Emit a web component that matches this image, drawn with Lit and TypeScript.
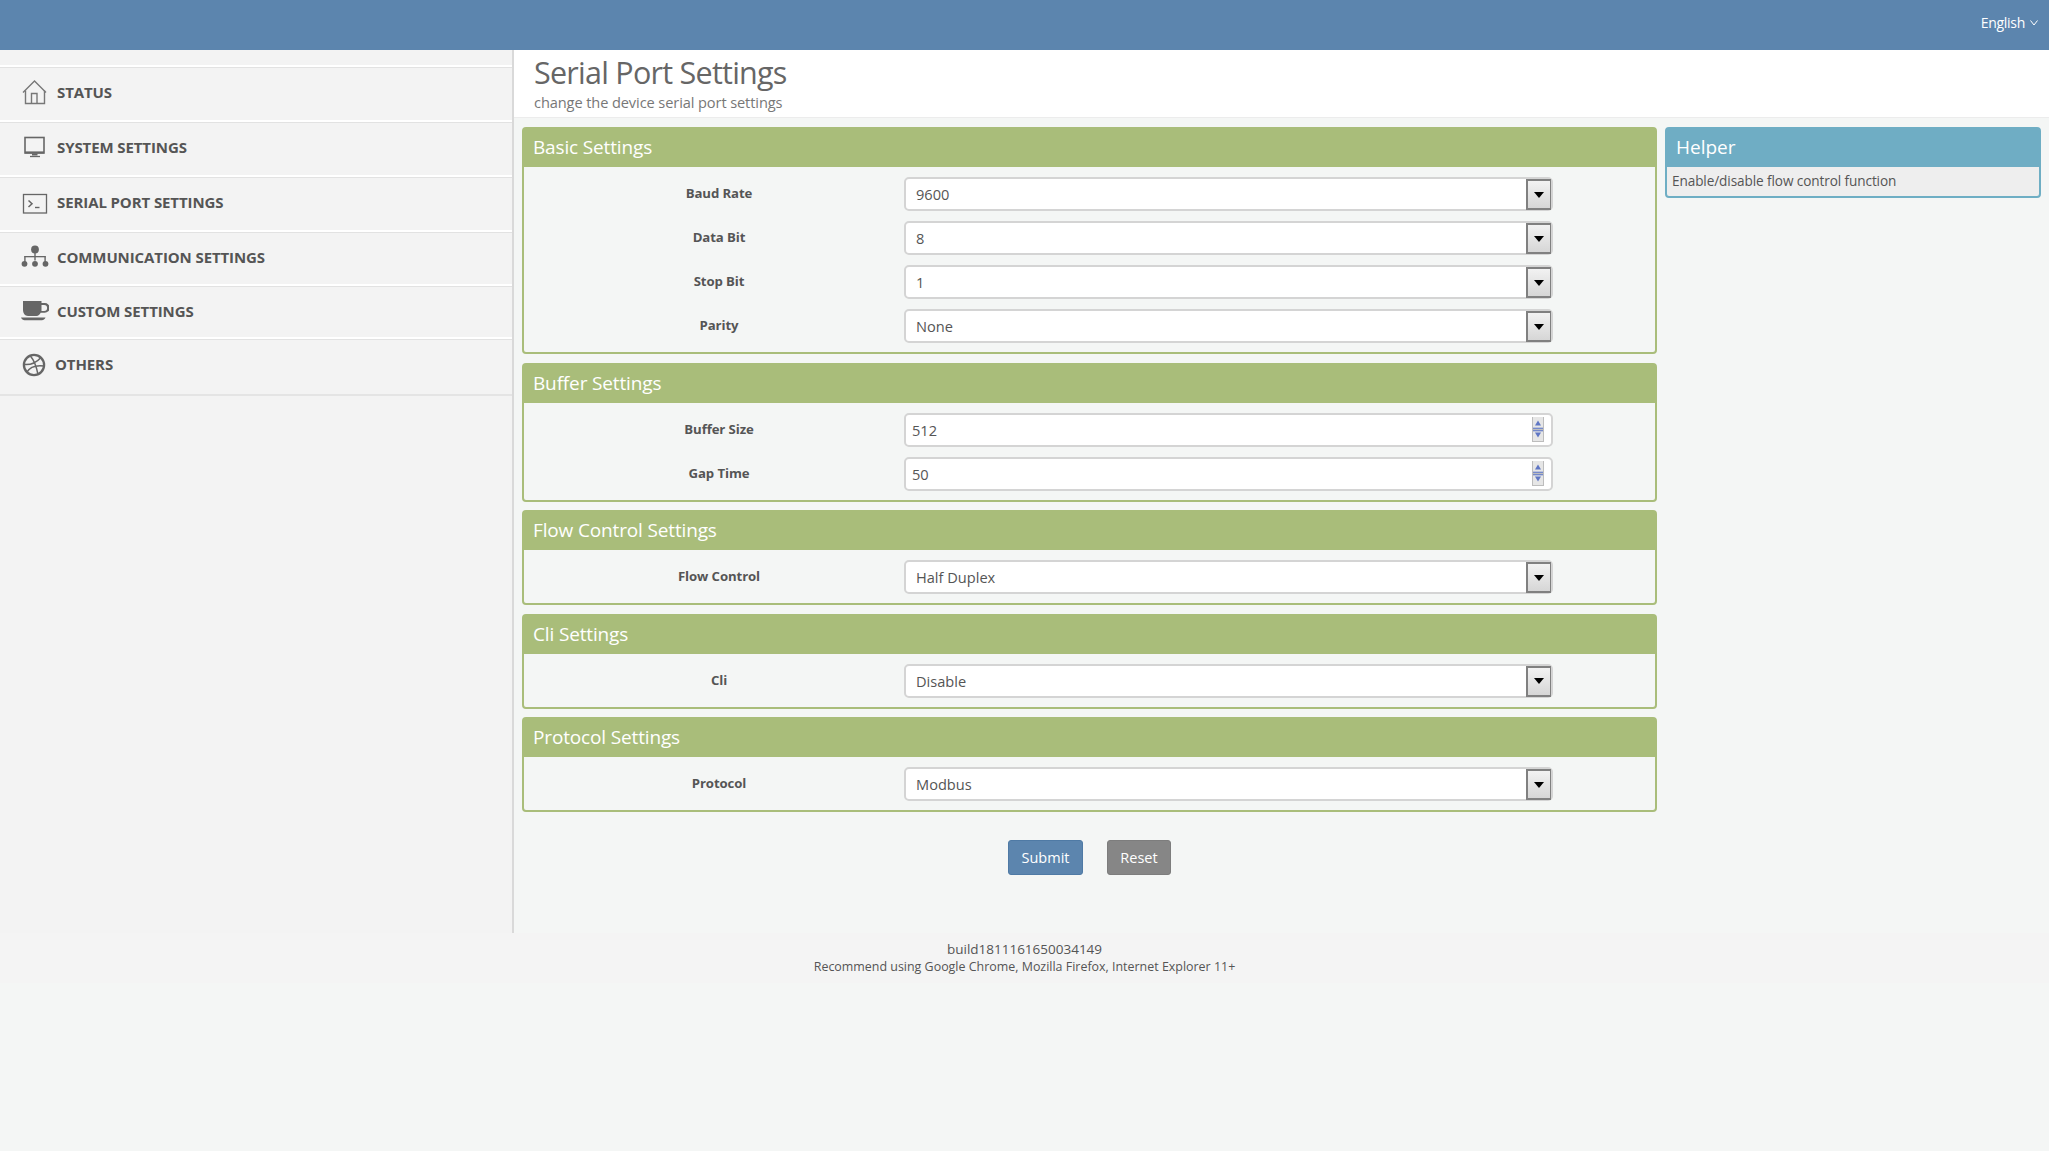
import { LitElement, html, css, svg } from "lit";
import { customElement } from "lit/decorators.js";

type Field = { label: string; value: string; kind: "select" | "number" };
type Panel = { title: string; fields: Field[] };

const PANELS: Panel[] = [
  { title: "Basic Settings", fields: [
    { label: "Baud Rate", value: "9600", kind: "select" },
    { label: "Data Bit", value: "8", kind: "select" },
    { label: "Stop Bit", value: "1", kind: "select" },
    { label: "Parity", value: "None", kind: "select" },
  ] },
  { title: "Buffer Settings", fields: [
    { label: "Buffer Size", value: "512", kind: "number" },
    { label: "Gap Time", value: "50", kind: "number" },
  ] },
  { title: "Flow Control Settings", fields: [{ label: "Flow Control", value: "Half Duplex", kind: "select" }] },
  { title: "Cli Settings", fields: [{ label: "Cli", value: "Disable", kind: "select" }] },
  { title: "Protocol Settings", fields: [{ label: "Protocol", value: "Modbus", kind: "select" }] },
];

const ICONS = {
  home: svg`<svg width="26" height="26" viewBox="0 0 26 26" fill="none" stroke="#777" stroke-width="1.4"><path d="M1 13.500 12.500 2 24 13.500"/><path d="M3.500 11.500V24.500H22.500V11.500"/><path d="M9.500 24.500V14.500h5.500V24.500"/></svg>`,
  monitor: svg`<svg width="26" height="26" viewBox="0 -2 26 26" fill="none" stroke="#666"><rect x="3" y="1.500" width="19" height="15.500" stroke-width="1.6"/><path d="M3 16.400h19" stroke-width="2"/><path d="M10 18.500h5.500" stroke-width="2"/><path d="M8 20.500h10" stroke-width="1.300"/></svg>`,
  terminal: svg`<svg width="26" height="26" viewBox="0 -4 26 26" fill="none" stroke="#666"><rect x="1.500" y="1.500" width="23" height="18.500" stroke-width="1.300"/><path d="M6.500 7.500 10 10.700 6.500 14" stroke-width="1.500"/><path d="M13 14.500h4.500" stroke-width="1.400"/></svg>`,
  tree: svg`<svg width="28" height="24" viewBox="0 0 28 24" fill="#666"><circle cx="14" cy="4.500" r="3.900"/><path d="M13.300 6h1.400v9.500h-1.400z"/><path d="M3.500 11h21v1.300h-21z"/><path d="M3.200 11h1.400v6h-1.400zM23.400 11h1.400v6h-1.400z"/><circle cx="3.500" cy="18.800" r="2.900"/><circle cx="14" cy="18.800" r="2.900"/><circle cx="24.500" cy="18.800" r="2.900"/></svg>`,
  cup: svg`<svg width="28" height="20" viewBox="0 0 28 20" fill="#666"><path d="M2 0h18.500v2h3.300a3.900 3.900 0 0 1 0 9.800h-4.100c-.9 2-2.300 3.200-4.200 3.200H7C4 15 2 12 2 9zM20.500 4v6h2.600a3 3 0 0 0 0-6z" fill-rule="evenodd"/><path d="M0 16.500h24.500c-.8 1.800-2.100 2.700-3.600 2.700H3.500C2 19.200.8 18.300 0 16.500z"/></svg>`,
  ball: svg`<svg width="24" height="26" viewBox="0 -2 24 26" fill="none" stroke="#666"><circle cx="12" cy="12" r="10.100" stroke-width="2.300"/><path d="M8 2.500c3.500 4 6.500 11 8 19M2 11.500c5.500.5 11.500-.8 17-7M4.500 19.500c3-5 8-8 18-6.500" stroke-width="1.500"/></svg>`,
};

const NAV = [
  { label: "STATUS", icon: ICONS.home, cls: "h55" },
  { label: "SYSTEM SETTINGS", icon: ICONS.monitor, cls: "h55" },
  { label: "SERIAL PORT SETTINGS", icon: ICONS.terminal, cls: "h55" },
  { label: "COMMUNICATION SETTINGS", icon: ICONS.tree, cls: "h54" },
  { label: "CUSTOM SETTINGS", icon: ICONS.cup, cls: "h53" },
  { label: "OTHERS", icon: ICONS.ball, cls: "h59 tight" },
];

@customElement("app-root")
export class AppRoot extends LitElement {
  static styles = css`
    :host { display: block; min-height: 1151px; background: #f4f6f5; color: #555; font-family: "Open Sans", "Noto Sans", sans-serif; font-size: 14px; }
    * { box-sizing: border-box; }
    .top { height: 50px; background: #5c85ae; display: flex; justify-content: flex-end; align-items: center; padding: 0 11px 5px 0; color: #fff; font-size: 14px; letter-spacing: -0.3px; gap: 5px; }
    .main { display: flex; height: 883px; }
    .side { width: 514px; flex: none; background: #f3f3f3; border-right: 2px solid #d9d9d9; padding-top: 15px; }
    .nav { display: flex; align-items: center; border-top: 2px solid #fff; box-shadow: inset 0 1px 0 #e2e2e2; padding: 0 0 3px 21px; font-weight: 700; font-size: 15px; letter-spacing: -0.1px; color: #555; }
    .nav.last { border-bottom: 2px solid #e4e4e4; }
    .h55 { height: 55px; } .h54 { height: 54px; } .h53 { height: 53px; padding-bottom: 2px; } .h59 { height: 59px; padding-bottom: 5px; }
    .ico { width: 36px; flex: none; display: flex; justify-content: center; padding-right: 8px; }
    .tight .ico { width: 34px; }
    .content { flex: 1; display: flex; flex-direction: column; min-width: 0; }
    .head { height: 68px; background: #fff; border-bottom: 1px solid #ececec; padding: 0 0 0 20px; }
    h1 { margin: 0; padding-top: 1px; font-weight: 400; font-size: 30.500px; line-height: 42px; letter-spacing: -0.75px; color: #666; }
    .sub { font-size: 14.600px; line-height: 18px; color: #777; letter-spacing: -0.1px; }
    .cols { display: flex; gap: 8px; padding: 9px 8px 0 8px; }
    .left { width: 1135px; flex: none; display: flex; flex-direction: column; gap: 8.500px; }
    .panel { border: 2px solid #a9bd7a; border-radius: 4px; }
    .ph { height: 39px; margin: -1px -1px 0; padding-left: 10px; background: #a9bd7a; color: #fff; font-size: 19px; line-height: 38px; letter-spacing: -0.15px; }
    .pb { padding: 10px 0 9px; display: flex; flex-direction: column; gap: 10px; }
    .row { height: 34px; display: flex; }
    .lab { width: 380px; padding-left: 10px; text-align: center; font-weight: 700; font-size: 13.200px; line-height: 32px; color: #555; letter-spacing: -0.1px; }
    .ctl { position: relative; width: 649px; height: 34px; }
    .ctl select, .ctl input { display: block; width: 100%; height: 100%; appearance: none; border: 2px solid #d4d4d4; border-radius: 5px; background: #fff; font: inherit; font-size: 14.600px; color: #555; padding: 0 0 0 10px; outline: none; }
    .ctl input { padding-left: 6px; }
    .arrow { position: absolute; right: 2px; top: 2px; width: 25px; height: 31px; border: 2px solid #808080; border-right-width: 1px; background: linear-gradient(#f2f2f2, #d6d6d6); display: flex; align-items: center; justify-content: center; pointer-events: none; }
    .tri { width: 0; height: 0; border-left: 5.500px solid transparent; border-right: 5.500px solid transparent; border-top: 6px solid #000; }
    .spin { position: absolute; right: 9px; top: 4px; width: 12px; height: 25px; pointer-events: none; }
    .actions { display: flex; gap: 24px; padding: 19.500px 0 0 486px; }
    button { height: 35px; border-radius: 3px; color: #fff; font: inherit; font-size: 14.500px; padding: 0; }
    .submit { width: 75px; background: #5c85ae; border: 1px solid #4f7aa5; }
    .reset { width: 64px; background: #868686; border: 1px solid #7d7d7d; }
    .helper { width: 376px; flex: none; align-self: flex-start; border: 2px solid #6eaec4; border-radius: 4px; background: #eee; }
    .hh { height: 39px; margin: -1px -1px 0; padding-left: 10px; background: #6fadc4; color: #fff; font-size: 19px; line-height: 38px; }
    .hb { padding: 5px 5px 6px; font-size: 13.600px; line-height: 18px; color: #555; letter-spacing: -0.1px; height: 29px; }
    .foot { height: 50px; background: #f4f4f4; text-align: center; padding-top: 8px; color: #555; }
    .f1 { font-size: 13.500px; line-height: 17px; }
    .f2 { font-size: 12.450px; line-height: 17px; }
  `;

  private renderField(f: Field) {
    return html`<div class="row">
      <div class="lab">${f.label}</div>
      <div class="ctl">
        ${f.kind === "select"
          ? html`<select aria-label=${f.label}><option>${f.value}</option></select><div class="arrow"><div class="tri"></div></div>`
          : html`<input aria-label=${f.label} .value=${f.value} />
              <svg class="spin" viewBox="0 0 12 25">
                <path d="M0.500 0v25M11.500 0v25" stroke="#bdbdbd" fill="none"/>
                <rect x="1" y="0" width="10" height="11" fill="#e6e6e6"/>
                <rect x="1" y="13" width="10" height="12" fill="#e6e6e6"/>
                <path d="M1 11.300h10" stroke="#6f84c9" stroke-width="1.300"/>
                <path d="M1 12.500h10" stroke="#bdbdbd"/>
                <path d="M1 13.700h10" stroke="#6f84c9" stroke-width="1.300"/>
                <path d="M6 3.500 9 8.500H3z" fill="#5f76c4"/>
                <path d="M6 20.500 3 15.500h6z" fill="#5f76c4"/>
                <path d="M1 24.500h10" stroke="#bdbdbd"/>
              </svg>`}
      </div>
    </div>`;
  }

  render() {
    return html`
      <div class="top"><span>English</span>
        <svg width="8" height="6" viewBox="0 0 8 6" fill="none" stroke="#fff"><path d="M.5.500 4 5 7.500.500"/></svg>
      </div>
      <div class="main">
        <aside class="side">
          ${NAV.map((n, i) => html`<div class="nav ${n.cls} ${i === NAV.length - 1 ? "last" : ""}"><span class="ico">${n.icon}</span><span>${n.label}</span></div>`)}
        </aside>
        <main class="content">
          <header class="head"><h1>Serial Port Settings</h1><div class="sub">change the device serial port settings</div></header>
          <div class="cols">
            <div class="left">
              ${PANELS.map((p) => html`<section class="panel"><div class="ph">${p.title}</div><div class="pb">${p.fields.map((f) => this.renderField(f))}</div></section>`)}
              <div class="actions"><button class="submit">Submit</button><button class="reset">Reset</button></div>
            </div>
            <aside class="helper"><div class="hh">Helper</div><div class="hb">Enable/disable flow control function</div></aside>
          </div>
        </main>
      </div>
      <footer class="foot"><div class="f1">build1811161650034149</div><div class="f2">Recommend using Google Chrome, Mozilla Firefox, Internet Explorer 11+</div></footer>
    `;
  }
}
